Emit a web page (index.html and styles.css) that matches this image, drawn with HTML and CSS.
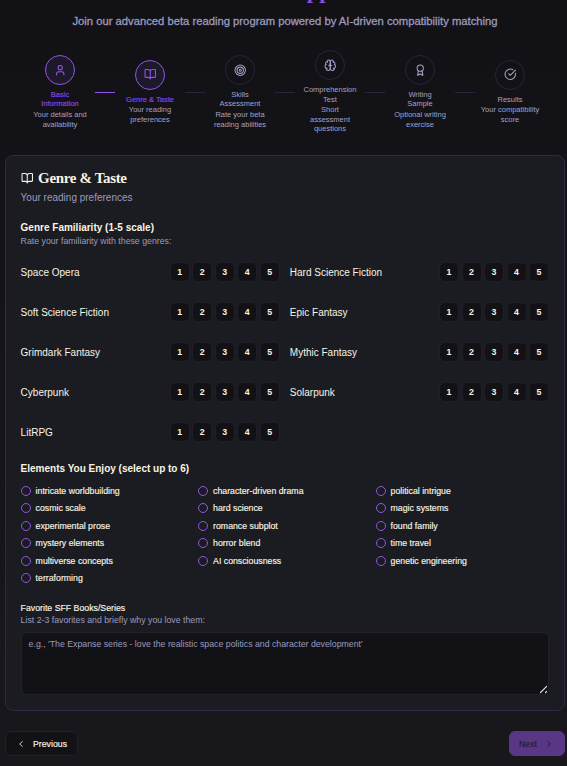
FILE: index.html
```html
<!DOCTYPE html>
<html lang="en">
<head>
<meta charset="utf-8">
<title>Beta Reader Application</title>
<link rel="stylesheet" href="styles.css">
</head>
<body>
<svg class="defs" width="0" height="0" aria-hidden="true">
  <symbol id="book" viewBox="0 0 24 24"><path d="M12 7v14M3 18a1 1 0 0 1-1-1V4a1 1 0 0 1 1-1h5a4 4 0 0 1 4 4 4 4 0 0 1 4-4h5a1 1 0 0 1 1 1v13a1 1 0 0 1-1 1h-6a3 3 0 0 0-3 3 3 3 0 0 0-3-3z"/></symbol>
</svg>
<header class="hero">
  <h1>Beta Reader Application</h1>
  <p>Join our advanced beta reading program powered by AI-driven compatibility matching</p>
</header>
<nav class="steps">
  <div class="step on"><span class="ring"><svg viewBox="0 0 24 24"><circle cx="12" cy="7" r="4"/><path d="M19 21v-2a4 4 0 0 0-4-4H9a4 4 0 0 0-4 4v2"/></svg></span><b>Basic Information</b><small>Your details and availability</small></div>
  <i class="link on"></i>
  <div class="step on"><span class="ring"><svg><use href="#book"/></svg></span><b>Genre &amp; Taste</b><small>Your reading preferences</small></div>
  <i class="link"></i>
  <div class="step"><span class="ring"><svg viewBox="0 0 24 24"><circle cx="12" cy="12" r="10"/><circle cx="12" cy="12" r="6"/><circle cx="12" cy="12" r="2"/></svg></span><b>Skills Assessment</b><small>Rate your beta reading abilities</small></div>
  <i class="link"></i>
  <div class="step"><span class="ring"><svg viewBox="0 0 24 24"><path d="M12 5a3 3 0 1 0-5.997.125 4 4 0 0 0-2.526 5.77 4 4 0 0 0 .556 6.588A4 4 0 1 0 12 18Z"/><path d="M12 5a3 3 0 1 1 5.997.125 4 4 0 0 1 2.526 5.77 4 4 0 0 1-.556 6.588A4 4 0 1 1 12 18Z"/><path d="M15 13a4.5 4.5 0 0 1-3-4 4.5 4.5 0 0 1-3 4M17.599 6.5a3 3 0 0 0 .399-1.375M6.003 5.125A3 3 0 0 0 6.401 6.5M3.477 10.896a4 4 0 0 1 .585-.396M19.938 10.5a4 4 0 0 1 .585.396M6 18a4 4 0 0 1-1.967-.516M19.967 17.484A4 4 0 0 1 18 18"/></svg></span><b>Comprehension Test</b><small>Short assessment questions</small></div>
  <i class="link"></i>
  <div class="step"><span class="ring"><svg viewBox="0 0 24 24"><circle cx="12" cy="8" r="6"/><path d="m15.477 12.89 1.515 8.526a.5.5 0 0 1-.81.47l-3.58-2.687a1 1 0 0 0-1.197 0l-3.586 2.686a.5.5 0 0 1-.81-.469l1.514-8.526"/></svg></span><b>Writing<br>Sample</b><small>Optional writing exercise</small></div>
  <i class="link"></i>
  <div class="step"><span class="ring"><svg viewBox="0 0 24 24"><path d="M21.801 10A10 10 0 1 1 17 3.335"/><path d="m9 11 3 3L22 4"/></svg></span><b>Results</b><small>Your compatibility score</small></div>
</nav>
<main class="card">
  <h2><svg><use href="#book"/></svg>Genre &amp; Taste</h2>
  <p class="sub">Your reading preferences</p>
  <h3>Genre Familiarity (1-5 scale)</h3>
  <p class="hint">Rate your familiarity with these genres:</p>
  <div class="genres">
    <div class="genre">Space Opera<span class="scale"><button>1</button><button>2</button><button>3</button><button>4</button><button>5</button></span></div>
    <div class="genre">Hard Science Fiction<span class="scale"><button>1</button><button>2</button><button>3</button><button>4</button><button>5</button></span></div>
    <div class="genre">Soft Science Fiction<span class="scale"><button>1</button><button>2</button><button>3</button><button>4</button><button>5</button></span></div>
    <div class="genre">Epic Fantasy<span class="scale"><button>1</button><button>2</button><button>3</button><button>4</button><button>5</button></span></div>
    <div class="genre">Grimdark Fantasy<span class="scale"><button>1</button><button>2</button><button>3</button><button>4</button><button>5</button></span></div>
    <div class="genre">Mythic Fantasy<span class="scale"><button>1</button><button>2</button><button>3</button><button>4</button><button>5</button></span></div>
    <div class="genre">Cyberpunk<span class="scale"><button>1</button><button>2</button><button>3</button><button>4</button><button>5</button></span></div>
    <div class="genre">Solarpunk<span class="scale"><button>1</button><button>2</button><button>3</button><button>4</button><button>5</button></span></div>
    <div class="genre">LitRPG<span class="scale"><button>1</button><button>2</button><button>3</button><button>4</button><button>5</button></span></div>
  </div>
  <h3 class="elements-title">Elements You Enjoy (select up to 6)</h3>
  <div class="elements">
    <label>intricate worldbuilding</label><label>character-driven drama</label><label>political intrigue</label>
    <label>cosmic scale</label><label>hard science</label><label>magic systems</label>
    <label>experimental prose</label><label>romance subplot</label><label>found family</label>
    <label>mystery elements</label><label>horror blend</label><label>time travel</label>
    <label>multiverse concepts</label><label>AI consciousness</label><label>genetic engineering</label>
    <label>terraforming</label>
  </div>
  <h4>Favorite SFF Books/Series</h4>
  <p class="hint">List 2-3 favorites and briefly why you love them:</p>
  <div class="field">
    <textarea placeholder="e.g., 'The Expanse series - love the realistic space politics and character development'"></textarea>
    <svg class="grip" viewBox="0 0 9 9"><path class="edge" d="M1 7 7 1M5.5 7.5 7.5 5.5"/><path d="M1.5 7.5 7.5 1.5M6.5 7.5 7.5 6.5"/></svg>
  </div>
</main>
<footer class="actions">
  <button class="prev"><svg viewBox="0 0 24 24"><path d="m15 18-6-6 6-6"/></svg>Previous</button>
  <button class="next">Next<svg viewBox="0 0 24 24"><path d="m9 18 6-6-6-6"/></svg></button>
</footer>
</body>
</html>
```
FILE: styles.css
```css
* { box-sizing: border-box; margin: 0; }
html { background: #131217; }
body {
  height: 766px;
  overflow: hidden;
  padding: 0 2px 0 5px;
  background: linear-gradient(#121116, #18171c);
  font-family: "Liberation Sans", Arial, sans-serif;
  color: #f8f4e3;
}
svg { fill: none; stroke: currentColor; stroke-width: 2; stroke-linecap: round; stroke-linejoin: round; flex: none; }
.defs { position: absolute; }
button, textarea { font-family: inherit; }

.hero { display: flow-root; height: 51px; text-align: center; }
.hero h1 {
  height: 14px;
  margin-top: -16px;
  font: bold 22.5px/14px "Liberation Serif", serif;
  color: #8b50d8;
}
.hero p {
  margin-top: 16px;
  font-size: 11.25px;
  line-height: 15px;
  color: #9c9bbd;
  -webkit-text-stroke: 0.3px #9c9bbd;
}

.steps { display: flex; align-items: center; justify-content: center; height: 82px; }
.step { width: 70px; display: flex; flex-direction: column; align-items: center; text-align: center; color: #a3a1c5; }
.ring { width: 30px; height: 30px; border: 1px solid #28253a; border-radius: 50%; display: grid; place-items: center; }
.ring svg { width: 12.5px; height: 12.5px; }
.step b { width: 55px; margin-top: 5px; font-weight: normal; font-size: 7.5px; line-height: 9.4px; }
.step small { width: 60px; margin-top: 1.3px; font-size: 7.5px; line-height: 9.4px; }
.step.on .ring { border-color: #9254e4; background: #1e182b; color: #9254e4; }
.step.on b { color: #8b45ee; -webkit-text-stroke: 0.15px #8b45ee; }
.link { width: 20px; height: 1px; background: #28253a; }
.link.on { background: #9254e4; }

.card {
  height: 556px;
  margin-top: 22px;
  padding: 15px 15px 15px 14.6px;
  border: 1px solid #2d2a45;
  border-radius: 8px;
  background: #1b1c21;
}
.card h2 { display: flex; align-items: center; gap: 5px; height: 15px; font: bold 15px/15px "Liberation Serif", serif; letter-spacing: -0.35px; }
.card h2 svg { width: 12.5px; height: 12.5px; }
.sub { margin-top: 5px; font-size: 10px; line-height: 14px; color: #9c9bbd; }
.card h3 { margin-top: 16px; font-size: 10px; line-height: 14px; }
.hint { font-size: 8.75px; line-height: 12px; color: #9c9bbd; }
.genres { display: grid; grid-template-columns: 1fr 1fr; gap: 20px 10px; margin-top: 15px; }
.genre { display: flex; align-items: center; justify-content: space-between; height: 20px; font-size: 10px; }
.scale { display: flex; gap: 2.5px; }
.scale button {
  width: 20px; height: 20px; padding: 0;
  border: 1px solid #201f29; border-radius: 6px;
  background: #121116; color: #f8f4e3;
  font-size: 8.75px; font-weight: bold;
}
.card .elements-title { margin-top: 20px; }
.elements { display: grid; grid-template-columns: repeat(3, 1fr); column-gap: 4px; grid-auto-rows: 17.5px; margin-top: 6px; }
.elements label { display: flex; align-items: center; gap: 5px; font-size: 8.75px; -webkit-text-stroke: 0.15px #f8f4e3; }
.elements label::before { content: ""; flex: none; box-sizing: border-box; width: 10px; height: 10px; border: 1px solid #9254e4; border-radius: 50%; }
.card h4 { margin-top: 15px; font-weight: normal; font-size: 8.75px; line-height: 12px; -webkit-text-stroke: 0.15px #f8f4e3; }
.field { position: relative; margin-top: 6px; }
textarea {
  display: block; width: 100%; height: 63px; padding: 5px 7px;
  border: 1px solid #22202c; border-radius: 6px;
  background: #121116; color: #f8f4e3;
  font-size: 8.75px; line-height: 13px;
  resize: none;
}
textarea::placeholder { color: #9c9bbd; }
.grip { position: absolute; right: 1px; bottom: 1px; width: 9px; height: 9px; color: #d8d8d8; stroke-width: 1.2; }
.grip .edge { stroke: #000; }

.actions { display: flex; justify-content: space-between; margin-top: 20px; }
.actions button {
  display: flex; align-items: center; height: 25px; padding: 0 10px;
  border: 1px solid #22202c; border-radius: 6px; font-size: 8.75px;
}
.actions svg { width: 10px; height: 10px; }
.prev { gap: 7px; background: #121116; color: #f8f4e3; -webkit-text-stroke: 0.15px #f8f4e3; }
.actions .next { gap: 7px; padding-left: 9px; border-color: #593784; background: #593784; color: #18151f; }
```
